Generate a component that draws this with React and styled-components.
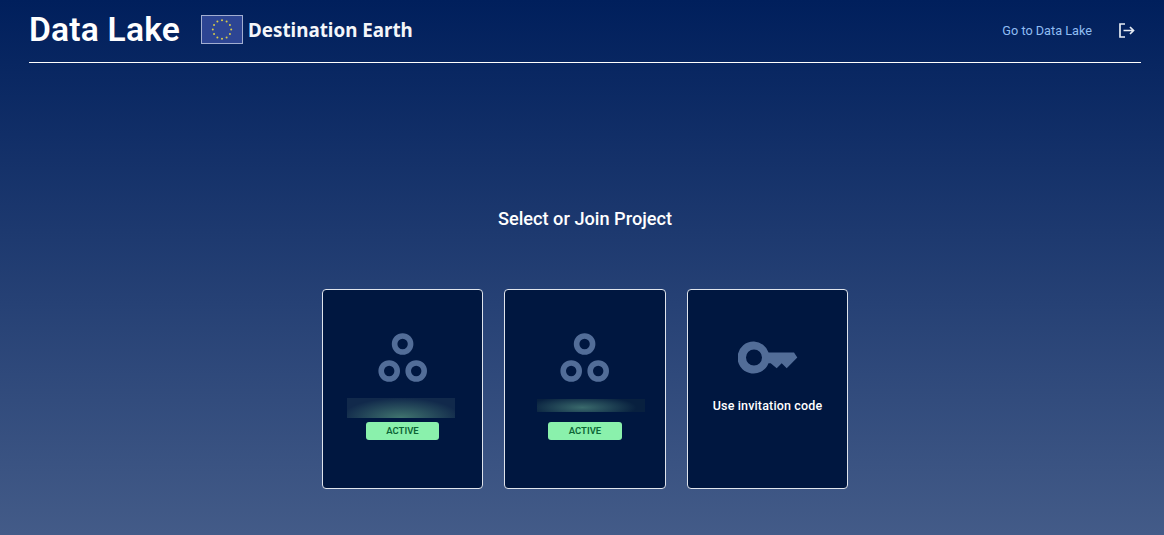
import React from 'react';
import styled, { createGlobalStyle } from 'styled-components';

const Global = createGlobalStyle`
  html, body { margin: 0; padding: 0; height: 100%; }
  body { font-family: Roboto, "Liberation Sans", sans-serif; }
`;

const Page = styled.div`
  width: 100%;
  height: 535px;
  overflow: hidden;
  background: linear-gradient(180deg, #001f5c 0%, #435b88 100%);
  color: #fff;
  padding: 0 23px 0 29px;
  box-sizing: border-box;
`;

const Header = styled.header`
  display: flex;
  align-items: center;
  justify-content: space-between;
  height: 62px;
  border-bottom: 1px solid #fff;
`;

const Brand = styled.div`
  display: flex;
  align-items: center;
`;

const Title = styled.h1`
  margin: 0 21px 3px 0;
  font-size: 33.6px;
  line-height: 40px;
  font-weight: 600;
  letter-spacing: 0.2px;
`;

const Wordmark = styled.span`
  margin: 0 0 3px 5px;
  font-family: "Noto Sans", sans-serif;
  font-size: 18.8px;
  font-weight: 700;
  color: #f4f6fa;
`;

const Nav = styled.nav`
  display: flex;
  align-items: center;
  gap: 27px;
  padding: 0 6px 2px 0;
`;

const NavLink = styled.a`
  color: #90bdf2;
  font-size: 12.7px;
`;

const Main = styled.main`
  display: flex;
  flex-direction: column;
  align-items: center;
`;

const Heading = styled.h2`
  margin: 144px 0 58px;
  font-size: 18.2px;
  line-height: 24px;
  font-weight: 500;
`;

const Cards = styled.div`
  display: flex;
  gap: 21px;
`;

const Card = styled.div`
  width: 161.5px;
  height: 200px;
  box-sizing: border-box;
  display: flex;
  flex-direction: column;
  align-items: center;
  padding-top: ${p => p.$top}px;
  background: #001740;
  border: 1px solid #dfe4ec;
  border-radius: 4px;
`;

const Blurred = styled.div`
  width: 108px;
  height: ${p => p.$height}px;
  margin-top: ${p => p.$top}px;
  margin-left: ${p => p.$shift}px;
  background: ${p => p.$glow};
`;

const Badge = styled.span`
  width: 73.5px;
  height: 18px;
  margin-top: ${p => p.$top}px;
  display: flex;
  align-items: center;
  justify-content: center;
  padding-bottom: 1px;
  box-sizing: border-box;
  background: #8af1ac;
  border-radius: 3px;
  color: #0c6536;
  font-size: 9.5px;
  font-weight: 600;
`;

const InviteLabel = styled.span`
  margin-top: 24px;
  font-size: 12.5px;
  line-height: 16px;
  font-weight: 500;
  letter-spacing: 0.15px;
`;

const FlagMark = styled.svg`
  display: block;
  flex: none;
  margin-bottom: 3px;
`;

const Flag = () => (
  <FlagMark width="42" height="29" viewBox="0 0 42 29">
    <rect x="0.5" y="0.5" width="41" height="28" fill="#2d4593" stroke="#a2aed0" />
    {Array.from({ length: 12 }).map((_, i) => {
      const a = (i * Math.PI) / 6;
      return <circle key={i} cx={21 + 9.2 * Math.cos(a)} cy={14.5 + 9.2 * Math.sin(a)} r="1" fill="#d8cb4a" />;
    })}
  </FlagMark>
);

const LogoutIcon = () => (
  <svg width="16" height="15" viewBox="0 0 16 15" fill="none" stroke="#e6ebf3" strokeWidth="1.7">
    <path d="M6 1H1v13h5" />
    <path d="M4.5 7.5h10M11 4l3.5 3.5L11 11" />
  </svg>
);

const ProjectIcon = () => (
  <svg width="50" height="50" viewBox="0 0 50 50" fill="none" stroke="#526d98" strokeWidth="5.6">
    <circle cx="24.6" cy="11" r="8" />
    <circle cx="11.2" cy="38" r="8" />
    <circle cx="38.2" cy="38" r="8" />
  </svg>
);

const KeyIcon = () => (
  <svg width="60" height="33" viewBox="0 0 60 33" fill="#526d98">
    <path fillRule="evenodd" d="M16 0.5a16 16 0 0 1 14.6 11H56l3.3 5-10.6 10.7-5-5-5 5-6-5h-2.2A16 16 0 1 1 16 0.5zM16 8.5a8 8 0 1 0 0 16 8 8 0 0 0 0-16z" />
  </svg>
);

const glowBottom = 'radial-gradient(ellipse 55% 100% at 50% 100%, #41756f 0%, rgba(65, 117, 111, 0.35) 65%, rgba(65, 117, 111, 0) 100%), #11294b';
const glowMiddle = 'radial-gradient(ellipse 50% 90% at 42% 65%, #3a6a6c 0%, rgba(58, 106, 108, 0.45) 55%, rgba(58, 106, 108, 0) 100%), #08203f';

export default function App() {
  return (
    <Page>
      <Global />
      <Header>
        <Brand>
          <Title>Data Lake</Title>
          <Flag />
          <Wordmark>Destination Earth</Wordmark>
        </Brand>
        <Nav>
          <NavLink>Go to Data Lake</NavLink>
          <LogoutIcon />
        </Nav>
      </Header>
      <Main>
        <Heading>Select or Join Project</Heading>
        <Cards>
          <Card $top={43}>
            <ProjectIcon />
            <Blurred $height={20} $top={15} $shift={-4} $glow={glowBottom} />
            <Badge $top={4}>ACTIVE</Badge>
          </Card>
          <Card $top={43}>
            <ProjectIcon />
            <Blurred $height={13} $top={16} $shift={12} $glow={glowMiddle} />
            <Badge $top={10}>ACTIVE</Badge>
          </Card>
          <Card $top={51}>
            <KeyIcon />
            <InviteLabel>Use invitation code</InviteLabel>
          </Card>
        </Cards>
      </Main>
    </Page>
  );
}
